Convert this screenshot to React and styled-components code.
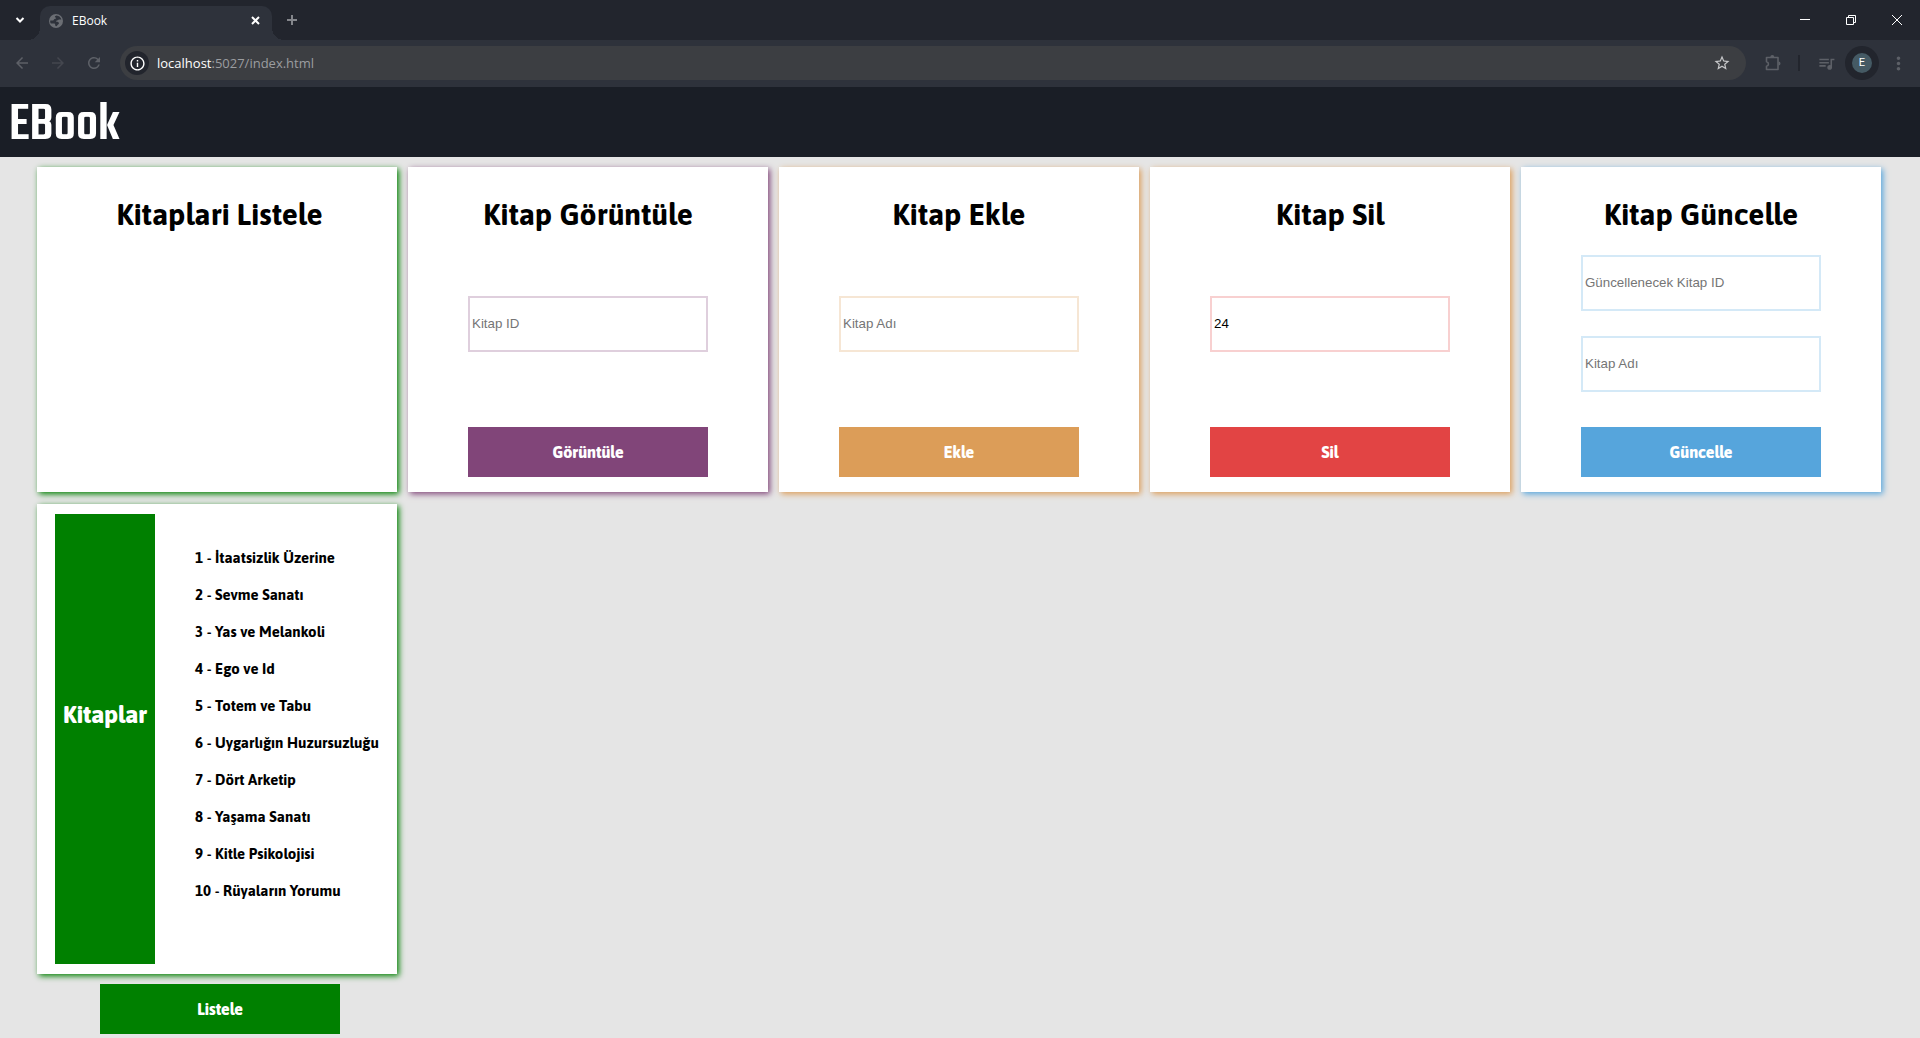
import React, { useState } from "react";
import styled, { createGlobalStyle } from "styled-components";
import {
  MdArrowBack, MdArrowForward, MdRefresh, MdInfoOutline, MdStarOutline,
  MdQueueMusic, MdMoreVert,
} from "react-icons/md";

const displayFont = 'Asap, Lato, "Noto Sans", sans-serif';
const chromeFont = '"Open Sans", "Noto Sans", sans-serif';
const formFont = '"Liberation Sans", Arial, sans-serif';

const GlobalStyle = createGlobalStyle`
  *, *::before, *::after { box-sizing: border-box; }
  body { margin: 0; background: #e5e5e5; font-family: ${displayFont}; }
  button, input { margin: 0; border: 0; }
  h1, h2, ul { margin: 0; padding: 0; }
  ul { list-style: none; }
`;

const TabStrip = styled.div`
  display: flex;
  align-items: flex-end;
  height: 40px;
  background: #22252d;
`;

const StripButton = styled.button`
  display: flex;
  align-items: center;
  justify-content: center;
  width: 40px;
  height: 40px;
  padding: 0;
  background: none;
  color: ${(p) => (p.$dim ? "#84868b" : "#ffffff")};
`;

const Tab = styled.div`
  position: relative;
  display: flex;
  align-items: center;
  gap: 8px;
  width: 232px;
  height: 34px;
  padding: 0 10px 5px 8px;
  border-radius: 10px 10px 0 0;
  background: #2e323b;
  color: #ffffff;
  font: 12px/18px ${chromeFont};

  &::before,
  &::after {
    content: "";
    position: absolute;
    bottom: 0;
    width: 12px;
    height: 12px;
  }
  &::before {
    right: 100%;
    background: radial-gradient(circle at 0 0, transparent 12px, #2e323b 12px);
  }
  &::after {
    left: 100%;
    background: radial-gradient(circle at 100% 0, transparent 12px, #2e323b 12px);
  }
`;

const TabTitle = styled.span`
  flex: 1;
`;

const TabClose = styled.button`
  display: flex;
  padding: 2px;
  background: none;
  color: #ffffff;
`;

const WindowControls = styled.div`
  display: flex;
  margin-left: auto;
`;

const WindowButton = styled(StripButton)`
  width: 46px;
`;

const Toolbar = styled.div`
  display: flex;
  align-items: center;
  height: 47px;
  padding: 0 4px 1px;
  background: #2e323b;
`;

const ToolButton = styled.button`
  display: flex;
  align-items: center;
  justify-content: center;
  width: 36px;
  height: 34px;
  padding: 0;
  background: none;
  color: ${(p) => (p.$faint ? "#44474f" : "#5d6067")};
`;

const AddressBar = styled.div`
  display: flex;
  align-items: center;
  flex: 1;
  height: 34px;
  margin: 0 9px 0 8px;
  padding: 0 15px 0 5px;
  border-radius: 17px;
  background: #3c3e42;
  color: #c7c8ca;
`;

const SiteInfo = styled.button`
  display: flex;
  align-items: center;
  justify-content: center;
  width: 24px;
  height: 24px;
  margin-right: 8px;
  padding: 0;
  border-radius: 50%;
  background: #22252d;
  color: #ffffff;
`;

const Url = styled.span`
  flex: 1;
  color: #9b9da0;
  font: 13px/20px ${chromeFont};
`;

const Host = styled.span`
  color: #ffffff;
`;

const StarButton = styled(SiteInfo)`
  width: 18px;
  margin: 0;
  background: none;
  color: #c7c8ca;
`;

const Divider = styled.span`
  width: 2px;
  height: 16px;
  margin: 0 8px 0 7px;
  background: #22252d;
`;

const Profile = styled.button`
  display: flex;
  align-items: center;
  justify-content: center;
  width: 34px;
  height: 34px;
  margin: 0 1px;
  padding: 0;
  border-radius: 50%;
  background: #22252d;
`;

const Avatar = styled.span`
  width: 20px;
  height: 20px;
  border-radius: 50%;
  background: #455a64;
  color: #ffffff;
  font: 11px/20px Roboto, sans-serif;
  text-align: center;
`;

const SiteHeader = styled.header`
  display: flex;
  align-items: center;
  height: 70px;
  padding: 8px 9px 0;
  background: #1a1e26;
`;

const Logo = styled.h1`
  color: #ffffff;
  font: 500 55px/60px Teko, "Roboto Condensed", Roboto, sans-serif;
`;

const Board = styled.main`
  display: grid;
  grid-template-columns: repeat(auto-fill, 360px);
  gap: 12px 11px;
  padding: 10px 37px 4px;
`;

const Card = styled.section`
  display: flex;
  flex-direction: column;
  align-items: center;
  min-height: 325px;
  padding: 29px 0 15px ${(p) => (p.$listing ? "5px" : "0")};
  background: #ffffff;
  box-shadow: 2px 2px 6px ${(p) => p.$shadow};
`;

const CardTitle = styled.h2`
  font-size: 30px;
  font-weight: 700;
  line-height: 36px;
`;

const Fields = styled.div`
  display: flex;
  flex: 1;
  flex-direction: column;
  justify-content: center;
  gap: 25px;
  padding-bottom: 12px;
`;

const Field = styled.input`
  width: 240px;
  height: 56px;
  padding: 0 2px 1px;
  border: 2px solid ${(p) => p.$border};
  background: #ffffff;
  color: #000000;
  font-family: ${formFont};

  &::placeholder { color: #757575; }
`;

const ActionButton = styled.button`
  width: 240px;
  height: 50px;
  background: ${(p) => p.$color};
  color: #ffffff;
  font: 800 16px/20px ${displayFont};
`;

const ListColumn = styled.div`
  display: flex;
  flex-direction: column;
`;

const ListActions = styled.div`
  display: flex;
  justify-content: center;
  padding: 10px 0 0 6px;
`;

const ListCard = styled.section`
  display: flex;
  gap: 40px;
  padding: 10px 18px;
  background: #ffffff;
  box-shadow: 2px 2px 6px green;
`;

const ListHeading = styled.div`
  display: flex;
  align-items: center;
  justify-content: center;
  width: 100px;
  height: 450px;
  padding-bottom: 48px;
  background: green;
  color: #ffffff;
`;

const ListTitle = styled.h2`
  font-size: 24px;
  font-weight: 800;
  line-height: 30px;
`;

const BookList = styled.ul`
  padding-top: 25px;
`;

const Book = styled.li`
  font-size: 15px;
  font-weight: 700;
  line-height: 37px;
  white-space: nowrap;
`;

const cards = [
  { title: "Kitaplari Listele", shadow: "green", fields: [], listing: true },
  { title: "Kitap Görüntüle", shadow: "#814579", color: "#814579", border: "#dfcfdd", action: "Görüntüle", fields: [{ label: "Kitap ID" }] },
  { title: "Kitap Ekle", shadow: "#dc9d58", color: "#dc9d58", border: "#f6e6d4", action: "Ekle", fields: [{ label: "Kitap Adı" }] },
  { title: "Kitap Sil", shadow: "#dc9d58", color: "#e24444", border: "#f8d0d0", action: "Sil", fields: [{ label: "Kitap ID", value: "24" }] },
  { title: "Kitap Güncelle", shadow: "#56a5dc", color: "#56a5dc", border: "#d4e9f7", action: "Güncelle", fields: [{ label: "Güncellenecek Kitap ID" }, { label: "Kitap Adı" }] },
];

const books = [
  "İtaatsizlik Üzerine", "Sevme Sanatı", "Yas ve Melankoli", "Ego ve Id", "Totem ve Tabu",
  "Uygarlığın Huzursuzluğu", "Dört Arketip", "Yaşama Sanatı", "Kitle Psikolojisi", "Rüyaların Yorumu",
];

function Stroke({ size, d, width = 1 }) {
  return (
    <svg width={size} height={size} viewBox={`0 0 ${size} ${size}`} fill="none" stroke="currentColor" strokeWidth={width} aria-hidden="true">
      <path d={d} />
    </svg>
  );
}

function Globe() {
  return (
    <svg width="16" height="16" viewBox="0 0 16 16" aria-hidden="true">
      <circle cx="8" cy="8" r="7" fill="#6b6e74" />
      <path d="M8.6 2.4c-2 .4-2.200 1.600-1 2.200 1.200.500 0 1.400-.900 1.500-1.200.200-.500 1.300-1.700 1.300H2.300c-.3 1.200 0 2.300.6 3.200h3.300c1.300 0 .8 1.300 1.200 2.200.400.900 1.500.200 1.900-.600.500-1 1.700-.700 1.600-2-.100-1.300-1.300-1.300-2.300-1.400-1-.200-.600-1.300.400-1.400 1-.100 1.200-.900 2-.900h2.400c-.4-2-2.400-4-4.800-4.100z" fill="#2e323b" />
    </svg>
  );
}

function Puzzle() {
  return (
    <svg width="18" height="18" viewBox="0 0 18 18" aria-hidden="true">
      <path d="M2.500 3.500H14v12H2.500v-3.300c2.600-.5 2.600-4 0-4.500z" fill="none" stroke="currentColor" strokeWidth="1.600" strokeLinejoin="round" />
      <path d="M6.300 3a2 2 0 0 1 4 0zM14.500 7.500a2 2 0 0 1 0 4z" fill="currentColor" />
    </svg>
  );
}

function BrowserChrome() {
  return (
    <div>
      <TabStrip>
        <StripButton aria-label="Search tabs"><Stroke size={10} width={2} d="M1.5 3l3.5 3.5L8.5 3" /></StripButton>
        <Tab>
          <Globe />
          <TabTitle>EBook</TabTitle>
          <TabClose aria-label="Close tab"><Stroke size={9} width={2} d="M1 1l7 7M8 1l-7 7" /></TabClose>
        </Tab>
        <StripButton $dim aria-label="New tab"><Stroke size={10} width={2} d="M5 0v10M0 5h10" /></StripButton>
        <WindowControls>
          <WindowButton aria-label="Minimize"><Stroke size={10} d="M0 4.5h10" /></WindowButton>
          <WindowButton aria-label="Restore"><Stroke size={10} d="M.5 2.5h7v7h-7zM2.5 2.5v-2h7v7h-2" /></WindowButton>
          <WindowButton aria-label="Close"><Stroke size={10} d="M0 0l10 10M10 0L0 10" /></WindowButton>
        </WindowControls>
      </TabStrip>
      <Toolbar>
        <ToolButton aria-label="Back"><MdArrowBack size={18} /></ToolButton>
        <ToolButton $faint aria-label="Forward"><MdArrowForward size={18} /></ToolButton>
        <ToolButton aria-label="Reload"><MdRefresh size={18} /></ToolButton>
        <AddressBar>
          <SiteInfo aria-label="Site information"><MdInfoOutline size={17} /></SiteInfo>
          <Url><Host>localhost</Host>:5027/index.html</Url>
          <StarButton aria-label="Bookmark"><MdStarOutline size={18} /></StarButton>
        </AddressBar>
        <ToolButton aria-label="Extensions"><Puzzle /></ToolButton>
        <Divider />
        <ToolButton aria-label="Media"><MdQueueMusic size={19} /></ToolButton>
        <Profile aria-label="Profile"><Avatar>E</Avatar></Profile>
        <ToolButton aria-label="Menu"><MdMoreVert size={21} /></ToolButton>
      </Toolbar>
    </div>
  );
}

function TextField({ label, value = "", border }) {
  const [text, setText] = useState(value);
  return (
    <Field type="text" aria-label={label} placeholder={label} value={text} $border={border} onChange={(e) => setText(e.target.value)} />
  );
}

export default function App() {
  return (
    <>
      <GlobalStyle />
      <BrowserChrome />
      <SiteHeader><Logo>EBook</Logo></SiteHeader>
      <Board>
        {cards.map((card) => (
          <Card key={card.title} $shadow={card.shadow} $listing={card.listing}>
            <CardTitle>{card.title}</CardTitle>
            <Fields>
              {card.fields.map((f) => <TextField key={f.label} {...f} border={card.border} />)}
            </Fields>
            {card.action && <ActionButton $color={card.color}>{card.action}</ActionButton>}
          </Card>
        ))}
        <ListColumn>
          <ListCard>
            <ListHeading><ListTitle>Kitaplar</ListTitle></ListHeading>
            <BookList>
              {books.map((book, i) => <Book key={book}>{i + 1} - {book}</Book>)}
            </BookList>
          </ListCard>
          <ListActions>
            <ActionButton $color="green">Listele</ActionButton>
          </ListActions>
        </ListColumn>
      </Board>
    </>
  );
}
